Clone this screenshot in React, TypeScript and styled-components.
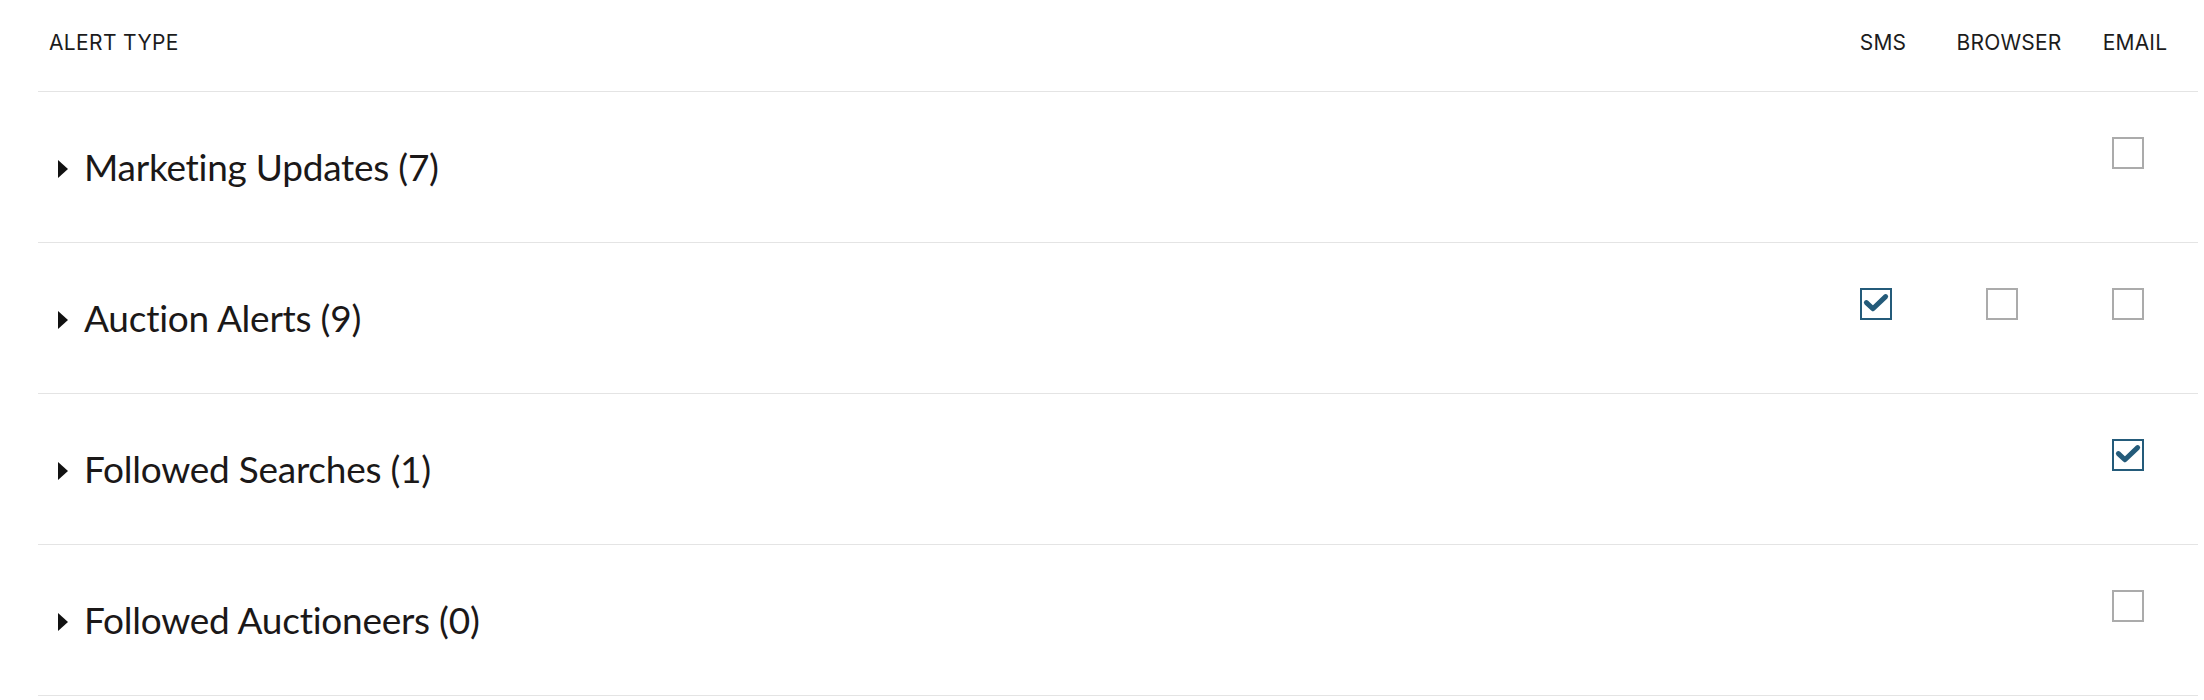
import React from "react";
import styled, { createGlobalStyle } from "styled-components";

const Global = createGlobalStyle`
  html, body { margin: 0; padding: 0; background: #ffffff; }
  body { font-family: "Inter", "Liberation Sans", sans-serif; }
`;

const Page = styled.div`
  padding: 0 6px 0 38px;
`;

const Table = styled.div`
  display: flex;
  flex-direction: column;
  width: 100%;
`;

const HeaderRow = styled.div`
  display: flex;
  align-items: flex-start;
  height: 91px;
  border-bottom: 1px solid #e4e4e4;
  box-sizing: content-box;
`;

const HeaderLabel = styled.div`
  flex: 1;
  padding: 32px 0 0 11px;
  font-family: "Inter", "Liberation Sans", sans-serif;
  font-size: 21px;
  line-height: 21px;
  color: #1c1c1c;
  letter-spacing: 0.35px;
`;

const HeaderCol = styled.div`
  width: 126px;
  padding-top: 32px;
  text-align: center;
  font-family: "Inter", "Liberation Sans", sans-serif;
  font-size: 21px;
  line-height: 21px;
  color: #1c1c1c;
  letter-spacing: 0.2px;
`;

const Row = styled.div`
  display: flex;
  align-items: center;
  height: 150px;
  border-bottom: 1px solid #e4e4e4;
  box-sizing: content-box;
`;

const Title = styled.div`
  flex: 1;
  display: flex;
  align-items: center;
  padding-left: 20px;
  gap: 16px;
  font-family: "Lato", "Liberation Sans", sans-serif;
  font-size: 37px;
  line-height: 38px;
  letter-spacing: -0.25px;
  color: #1b1818;
`;

const Caret = styled.svg`
  width: 10px;
  height: 18px;
  margin-top: 3px;
  flex: none;
`;

const Cell = styled.div`
  width: 126px;
  align-self: flex-start;
  padding-top: 45px;
  display: flex;
  justify-content: center;
`;

const Box = styled.span<{ $checked?: boolean }>`
  display: block;
  width: 32px;
  height: 32px;
  box-sizing: border-box;
  margin-right: 15px;
  border: 2px solid ${(p) => (p.$checked ? "#245b7a" : "#ababab")};
  background: #ffffff;
  position: relative;
`;

const Check = styled.svg`
  position: absolute;
  left: -2px;
  top: -2px;
  width: 32px;
  height: 32px;
`;

type Val = boolean | null;
const rows: { title: string; sms: Val; browser: Val; email: Val }[] = [
  { title: "Marketing Updates (7)", sms: null, browser: null, email: false },
  { title: "Auction Alerts (9)", sms: true, browser: false, email: false },
  { title: "Followed Searches (1)", sms: null, browser: null, email: true },
  { title: "Followed Auctioneers (0)", sms: null, browser: null, email: false },
];

const CheckBox: React.FC<{ value: Val }> = ({ value }) => {
  if (value === null) return null;
  return (
    <Box $checked={value}>
      {value && (
        <Check viewBox="0 0 32 32">
          <path
            d="M6.4 14.6 L12.9 20.8 L25.6 8.6"
            fill="none"
            stroke="#245b7a"
            strokeWidth="5"
            strokeLinecap="round"
            strokeLinejoin="round"
          />
        </Check>
      )}
    </Box>
  );
};

export default function App() {
  return (
    <>
      <Global />
      <Page>
        <Table>
          <HeaderRow>
            <HeaderLabel>ALERT TYPE</HeaderLabel>
            <HeaderCol>SMS</HeaderCol>
            <HeaderCol>BROWSER</HeaderCol>
            <HeaderCol>EMAIL</HeaderCol>
          </HeaderRow>
          {rows.map((r) => (
            <Row key={r.title}>
              <Title>
                <Caret viewBox="0 0 10 18">
                  <path d="M0 0 L10 9 L0 18 Z" fill="#111111" />
                </Caret>
                <span>{r.title}</span>
              </Title>
              <Cell>
                <CheckBox value={r.sms} />
              </Cell>
              <Cell>
                <CheckBox value={r.browser} />
              </Cell>
              <Cell>
                <CheckBox value={r.email} />
              </Cell>
            </Row>
          ))}
        </Table>
      </Page>
    </>
  );
}
